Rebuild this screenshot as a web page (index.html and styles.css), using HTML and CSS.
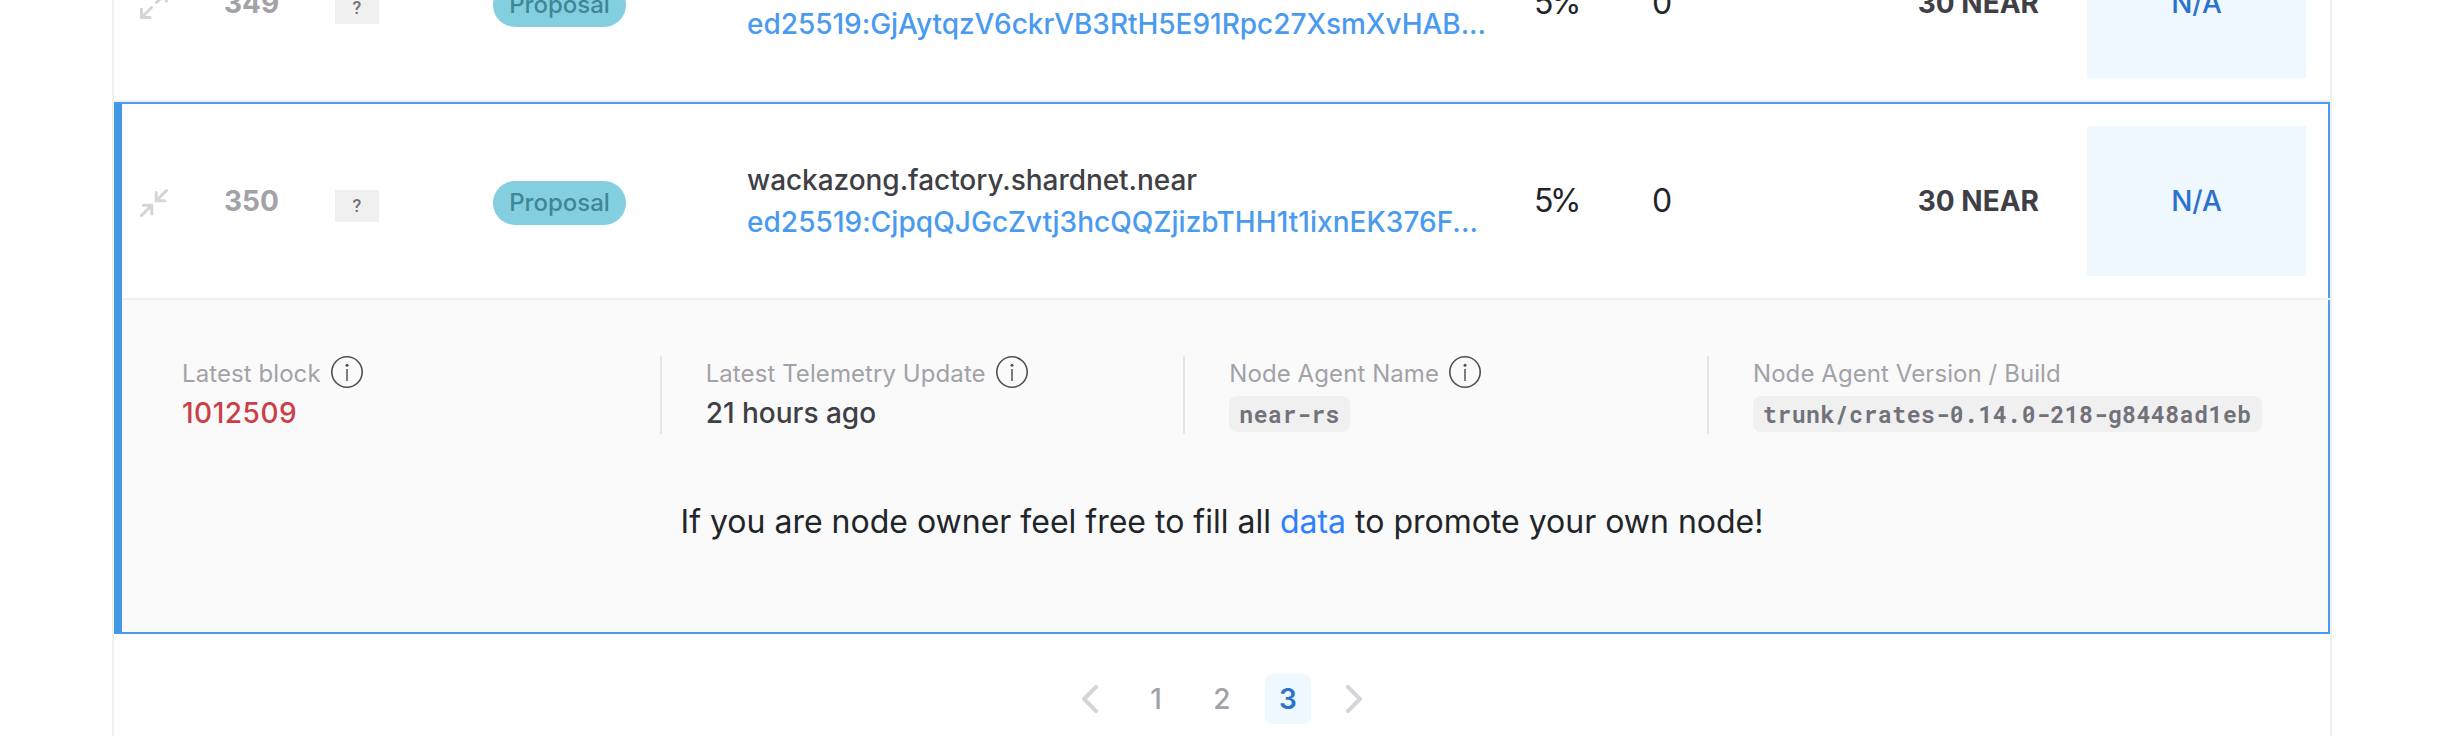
FILE: index.html
```html
<!DOCTYPE html>
<html lang="en">
<head>
<meta charset="utf-8">
<title>Validators</title>
<link rel="stylesheet" href="styles.css">
</head>
<body>
<svg class="defs" width="0" height="0">
  <symbol id="info" viewBox="0 0 32 32"><circle cx="16" cy="16" r="15.2" fill="none" stroke="#4f4f55" stroke-width="1.6"/><circle cx="16" cy="9.2" r="1.5" fill="#4f4f55"/><path d="M16 13v12" stroke="#6c6f74" stroke-width="1.8"/></symbol>
</svg>
<main class="table">
  <section class="row row-closed">
    <svg class="toggle" viewBox="0 0 28 28"><path d="M1.5 26.5 11.5 16.5M1.5 18v8.500h8.500M16.500 11.500 26.500 1.500M18 1.500h8.500v8.500"/></svg>
    <span class="index">349</span>
    <span class="country">?</span>
    <span class="state">Proposal</span>
    <div class="node"><span class="name">&nbsp;</span><span class="key key-tight">ed25519:GjAytqzV6ckrVB3RtH5E91Rpc27XsmXvHAB...</span></div>
    <span class="fee">5%</span>
    <span class="delegators">0</span>
    <span class="stake">30 NEAR</span>
    <span class="cumulative">N/A</span>
  </section>
  <section class="open">
    <div class="row">
      <svg class="toggle" viewBox="0 0 28 28"><path d="M1.500 26.500 11.500 16.500M3.500 16.200h8.300v8.500M26.500 1.500 16.500 11.500M16.200 3.500v8.300h8.500"/></svg>
      <span class="index">350</span>
      <span class="country">?</span>
      <span class="state">Proposal</span>
      <div class="node"><span class="name">wackazong.factory.shardnet.near</span><span class="key">ed25519:CjpqQJGcZvtj3hcQQZjizbTHH1t1ixnEK376F...</span></div>
      <span class="fee">5%</span>
      <span class="delegators">0</span>
      <span class="stake">30 NEAR</span>
      <span class="cumulative">N/A</span>
    </div>
    <div class="details">
      <div class="facts">
        <div class="fact"><div class="label">Latest block <svg><use href="#info"/></svg></div><div class="value value-red">1012509</div></div>
        <div class="fact"><div class="label">Latest Telemetry Update <svg><use href="#info"/></svg></div><div class="value">21 hours ago</div></div>
        <div class="fact"><div class="label">Node Agent Name <svg><use href="#info"/></svg></div><code>near-rs</code></div>
        <div class="fact"><div class="label">Node Agent Version / Build</div><code>trunk/crates-0.14.0-218-g8448ad1eb</code></div>
      </div>
      <p class="message">If you are node owner feel free to fill all <a>data</a> to promote your own node!</p>
    </div>
  </section>
  <nav class="pages">
    <svg class="chevron" viewBox="0 0 16 28"><path d="M14 2 2 14l12 12"/></svg>
    <span class="page">1</span>
    <span class="page">2</span>
    <span class="page page-active">3</span>
    <svg class="chevron chevron-next" viewBox="0 0 16 28"><path d="m2 2 12 12L2 26"/></svg>
  </nav>
</main>
</body>
</html>
```
FILE: styles.css
```css
* { box-sizing: border-box; }
body {
  margin: 0;
  height: 736px;
  overflow: hidden;
  background: #fff;
  color: #212529;
  font-family: Inter, sans-serif;
  font-size: 32px;
}
.defs { display: block; }
.table {
  width: 2220px;
  height: 736px;
  margin-left: 112px;
  border: solid #f0f0f1;
  border-width: 0 2px;
  display: flex;
  flex-direction: column;
  overflow: hidden;
}
.row {
  display: grid;
  grid-template-columns: 85px 110px 158px 254px 787px 117px 100px 336px 219px;
  align-items: center;
  height: 196px;
  flex: none;
  padding-left: 18px;
  border-bottom: 2px solid #f0f0f1;
}
.open .row { margin-right: -2px; }
.row-closed { height: 198px; margin-top: -96px; padding-left: 26px; padding-top: 2px; }
.toggle { width: 28px; height: 28px; margin-top: 4px; }
.toggle path {
  fill: none;
  stroke: #d5d4d8;
  stroke-width: 3;
  stroke-linecap: round;
  stroke-linejoin: round;
}
.index { margin-left: -1px; font-size: 28px; font-weight: 700; color: #a2a2a8; }
.country {
  width: 44px;
  height: 32px;
  margin-top: 10px;
  background: #f0f0f0;
  color: #72727a;
  font-family: Roboto, sans-serif;
  font-size: 18px;
  font-weight: 500;
  line-height: 32px;
  text-align: center;
}
.state {
  width: 133px;
  height: 44px;
  margin-top: 4px;
  border-radius: 22px;
  background: #84cfdf;
  color: #3d8797;
  font-size: 24px;
  font-weight: 500;
  line-height: 44px;
  text-align: center;
}
.node { display: flex; flex-direction: column; font-size: 28px; font-weight: 500; line-height: 42px; white-space: nowrap; }
.name { color: #3f4045; letter-spacing: -0.05px; }
.key { color: #4a9af0; letter-spacing: 0.05px; }
.key-tight { letter-spacing: -0.03px; }
.fee, .delegators { line-height: 48px; }
.fee { letter-spacing: -3.5px; }
.delegators { padding-left: 1px; }
.stake { justify-self: end; margin-right: 48px; font-size: 28px; font-weight: 700; color: #3f4045; white-space: nowrap; }
.cumulative {
  width: 219px;
  height: 150px;
  background: #f0f8ff;
  color: #2b72cc;
  font-size: 28px;
  font-weight: 500;
  line-height: 150px;
  text-align: center;
}
.open {
  height: 532px;
  flex: none;
  border: solid #4a9af0;
  border-width: 2px 2px 2px 8px;
  border-left-color: #4299e6;
}
.details { height: 332px; padding: 56px 0 0 60px; background: #fafafa; }
.facts { display: flex; height: 78px; }
.fact { flex: none; width: 523.67px; position: relative; }
.fact + .fact::before {
  content: "";
  position: absolute;
  left: -46px;
  top: 0;
  width: 2px;
  height: 78px;
  background: #e5e5e6;
}
.label { display: flex; align-items: center; gap: 10px; height: 34px; font-size: 24px; letter-spacing: 0.08px; color: #a2a2a8; white-space: nowrap; }
.label svg { width: 32px; height: 32px; margin-top: -2px; }
.value { height: 42px; margin-top: 2px; font-size: 28px; font-weight: 500; line-height: 42px; color: #3f4045; }
.value-red { color: #ca4048; letter-spacing: 0.5px; }
code {
  display: inline-block;
  height: 36px;
  margin-top: 6px;
  padding: 0 10px;
  border-radius: 8px;
  background: #f0f0f1;
  color: #72727a;
  font: 700 23px/36px "Roboto Mono", "DejaVu Sans Mono", monospace;
  letter-spacing: 0.57px;
  white-space: nowrap;
}
.message { margin: 64px 0 0 -66px; line-height: 48px; text-align: center; }
.message a { color: #2f80ff; }
.pages { display: flex; align-items: center; justify-content: center; height: 50px; margin-top: 40px; }
.page {
  width: 46px;
  height: 50px;
  margin-right: 20px;
  border-radius: 8px;
  color: #a2a2a8;
  font-size: 28px;
  font-weight: 500;
  line-height: 50px;
  text-align: center;
}
.page-active { margin-right: 35px; background: #f0f8ff; color: #2b72cc; font-weight: 600; }
.chevron { width: 16px; height: 28px; margin-right: 35px; }
.chevron-next { margin-right: 0; }
.chevron path { fill: none; stroke: #d5d4d8; stroke-width: 4; stroke-linecap: round; stroke-linejoin: round; }
```
